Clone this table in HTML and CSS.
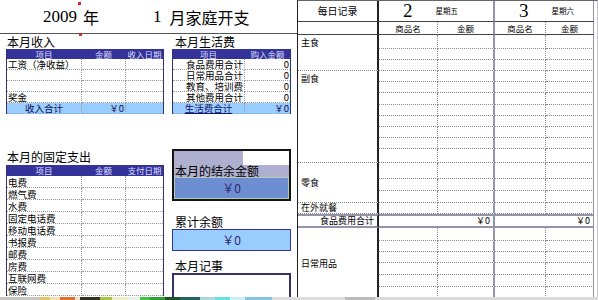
FILE: index.html
```html
<!DOCTYPE html>
<html lang="zh-CN">
<head>
<meta charset="utf-8">
<title>1月家庭开支</title>
<link rel="stylesheet" href="styles.css">
</head>
<body>
<div class="sheet">
  <div class="left">
    <span class="mark m1"></span>
    <span class="mark m2"></span>
    <div class="title">
      <span class="num yr">2009</span><span class="cj">年</span>
      <span class="num mo">1</span><span class="cj">月家庭开支</span>
    </div>

    <div class="blocks upper">
      <div class="block">
        <div class="cap">本月收入</div>
        <div class="tbl t3 income">
          <div class="h">项目</div><div class="h">金额</div><div class="h">收入日期</div>
          <div>工资（净收益）</div><div></div><div></div>
          <div></div><div></div><div></div>
          <div></div><div></div><div></div>
          <div>奖金</div><div></div><div></div>
          <div class="tot c">收入合计</div><div class="tot r">￥0</div><div class="tot"></div>
        </div>
      </div>
      <div class="block narrow">
        <div class="cap pad">本月生活费</div>
        <div class="tbl t2 living">
          <div class="h">项目</div><div class="h">购入金额</div>
          <div class="r">食品费用合计</div><div class="r">0</div>
          <div class="r">日常用品合计</div><div class="r">0</div>
          <div class="r">教育、培训费</div><div class="r">0</div>
          <div class="r">其他费用合计</div><div class="r">0</div>
          <div class="tot c link">生活费合计</div><div class="tot r">￥0</div>
        </div>
      </div>
    </div>

    <div class="blocks lower">
      <div class="block">
        <div class="cap cap-fixed">本月的固定支出</div>
        <div class="tbl t3 fixed">
          <div class="h">项目</div><div class="h">金额</div><div class="h">支付日期</div>
          <div>电费</div><div></div><div></div>
          <div>燃气费</div><div></div><div></div>
          <div>水费</div><div></div><div></div>
          <div>固定电话费</div><div></div><div></div>
          <div>移动电话费</div><div></div><div></div>
          <div>书报费</div><div></div><div></div>
          <div>邮费</div><div></div><div></div>
          <div>房费</div><div></div><div></div>
          <div>互联网费</div><div></div><div></div>
          <div>保险</div><div></div><div></div>
        </div>
      </div>
      <div class="block narrow">
        <div class="bal">
          <div class="bal-top">
            <div class="bal-white"></div>
            <div class="bal-label">本月的结余金额</div>
          </div>
          <div class="bal-val">￥0</div>
        </div>
        <div class="cap2 tall">累计余额</div>
        <div class="acc">￥0</div>
        <div class="cap2">本月记事</div>
        <div class="memo"></div>
      </div>
    </div>
  </div>

  <div class="right">
    <div class="dh dlab">每日记录</div>
    <div class="dh day d1"><span class="dnum">2</span><span class="wk">星期五</span></div>
    <div class="dh day d2"><span class="dnum">3</span><span class="wk">星期六</span></div>

    <div class="sublab"></div>
    <div class="row sub"><i>商品名</i><i>金额</i><i>商品名</i><i>金额</i></div>

    <div class="lab s3">主食</div>
    <div class="row"><i></i><i></i><i></i><i></i></div>
    <div class="row"><i></i><i></i><i></i><i></i></div>
    <div class="row"><i></i><i></i><i></i><i></i></div>

    <div class="lab s8">副食</div>
    <div class="row"><i></i><i></i><i></i><i></i></div>
    <div class="row"><i></i><i></i><i></i><i></i></div>
    <div class="row"><i></i><i></i><i></i><i></i></div>
    <div class="row"><i></i><i></i><i></i><i></i></div>
    <div class="row"><i></i><i></i><i></i><i></i></div>
    <div class="row"><i></i><i></i><i></i><i></i></div>
    <div class="row"><i></i><i></i><i></i><i></i></div>
    <div class="row"><i></i><i></i><i></i><i></i></div>

    <div class="lab s3 mid">零食</div>
    <div class="row"><i></i><i></i><i></i><i></i></div>
    <div class="row"><i></i><i></i><i></i><i></i></div>
    <div class="row"><i></i><i></i><i></i><i></i></div>

    <div class="lab mid one">在外就餐</div>
    <div class="row"><i></i><i></i><i></i><i></i></div>

    <div class="sum sl">食品费用合计</div>
    <div class="sum sv v1">￥0</div>
    <div class="sum sv v2">￥0</div>

    <div class="lab s6 mid">日常用品</div>
    <div class="row"><i></i><i></i><i></i><i></i></div>
    <div class="row"><i></i><i></i><i></i><i></i></div>
    <div class="row"><i></i><i></i><i></i><i></i></div>
    <div class="row"><i></i><i></i><i></i><i></i></div>
    <div class="row"><i></i><i></i><i></i><i></i></div>
    <div class="row"><i></i><i></i><i></i><i></i></div>
  </div>
</div>
<div class="strip"></div>
</body>
</html>
```
FILE: styles.css
```css
* { box-sizing: border-box; margin: 0; padding: 0; }
html, body { width: 598px; height: 300px; overflow: hidden; background: #fff; }
body { font-family: "Noto Sans CJK SC", "Liberation Sans", sans-serif; color: #000; }

.sheet { display: flex; height: 297px; overflow: hidden; }
.left { width: 297px; flex: none; position: relative; }

.mark { position: absolute; width: 3px; height: 3px; background: #d42a2a; }
.m1 { left: 78px; top: 2px; }
.m2 { left: 79px; top: 33px; }

/* title */
.title { height: 34px; border-bottom: 1px solid #555; display: flex; align-items: center; padding-left: 43px; }
.num { font-family: "Liberation Serif", serif; font-size: 17px; }
.cj { font-family: "Noto Sans CJK SC", sans-serif; font-size: 16px; }
.yr { margin-right: 6px; }
.mo { margin-left: 54px; margin-right: 8px; }

/* blocks */
.blocks { display: flex; gap: 8px; padding-left: 6px; align-items: flex-start; }
.upper { height: 115px; }
.block { width: 158px; flex: none; }
.block.narrow { width: 119px; }
.cap { height: 15px; font-size: 12px; line-height: 14px; display: flex; align-items: flex-end; padding-left: 1px; }
.cap.pad { padding-left: 3px; }
.cap.cap-fixed { height: 16px; line-height: 14px; padding-bottom: 1px; }

/* small tables */
.tbl { display: grid; border-left: 1px solid #33336a; border-right: 1px solid #33336a; font-size: 9.5px; }
.t3 { grid-template-columns: 75px 44px 37px; }
.t2 { grid-template-columns: 72px 45px; }
.income, .living { grid-template-rows: 10px repeat(5, 11px); }
.fixed { grid-template-rows: 11px repeat(10, 12px); }
.tbl > div { border-bottom: 1px dotted #9a9a9a; border-right: 1px dotted #9a9a9a; display: flex; align-items: center; white-space: nowrap; padding: 0 1px; line-height: 10px; }
.t3 > div:nth-child(3n), .t2 > div:nth-child(2n) { border-right: none; }
.tbl > .h { background: #333399; color: #dcdcff; justify-content: center; font-size: 8.5px; line-height: 9px; border-bottom: none; border-right-color: #333399; padding: 0; }
.tbl > .r { justify-content: flex-end; }
.tbl > .c { justify-content: center; }
.tbl > .tot { background: #99ccff; color: #101050; border-bottom-color: #7aa8d8; }
.tbl > .link { text-decoration: underline; color: #14146e; }

/* balance column */
.bal { height: 52px; border: 2px solid #141414; display: flex; flex-direction: column; }
.bal-top { flex: 1; background: #afafd0; display: flex; flex-direction: column; }
.bal-white { align-self: flex-end; width: 46px; height: 14px; background: #fff; }
.bal-label { font-size: 12px; line-height: 12px; padding-left: 1px; }
.bal-val { height: 22px; background: #6d8fd2; border: 1px solid #b9c9b9; text-align: center; font-size: 12px; line-height: 20px; color: #2a2a70; }
.cap2 { height: 22px; font-size: 12px; line-height: 14px; display: flex; align-items: flex-end; padding-left: 3px; }
.cap2.tall { height: 28px; }
.acc { height: 22px; background: #99ccff; border: 1px solid #333399; text-align: center; font-size: 12px; line-height: 20px; color: #2a2a70; }
.memo { height: 40px; border: 2px solid #33336a; background: #fff; }

/* right sheet */
.right { flex: 1; display: grid; align-content: start;
  grid-template-columns: 81px 59px 57px 51px 48px;
  grid-template-rows: 21px 13px 14px 11px 11px 11px 11px 12px 11px 11px 11px 11px 14px 16px 12px 12px 11px 14px 13px 11px 11px 12px 12px 13px;
  border-left: 1px solid #222; border-top: 1px solid #666; border-right: 1px solid #c8c8c8;
  font-size: 9px; line-height: 10px; }
.dh { border-bottom: 1px solid #444; display: flex; align-items: center; }
.dlab { justify-content: center; font-size: 10px; border-right: 2px solid #222; }
.day { grid-column: span 2; padding-left: 24px; gap: 23px; }
.d1 { border-right: 2px solid #9494aa; }
.d2 { border-right: 1px solid #9494aa; }
.dnum { font-family: "Liberation Serif", serif; font-size: 19px; line-height: 20px; }
.wk { font-size: 7.5px; }
.sublab { border-right: 2px solid #222; border-bottom: 1px solid #444; }

.row { display: contents; }
.row > i { font-style: normal; border-bottom: 1px dotted #8a8a8a; }
.row > i:nth-child(1) { border-right: 1px dotted #8a8a8a; }
.row > i:nth-child(2) { border-right: 2px solid #9494aa; }
.row > i:nth-child(3) { border-right: 1px dotted #8a8a8a; }
.row > i:nth-child(4) { border-right: 1px solid #9494aa; }
.sub > i { border-bottom: 1px solid #444; display: flex; align-items: center; justify-content: center; font-size: 8.5px; }

.lab { border-right: 2px solid #222; border-bottom: 1px dotted #8a8a8a; padding: 3px 0 0 3px; }
.lab.mid { display: flex; align-items: center; padding-top: 0; }
.s3 { grid-row: span 3; }
.s8 { grid-row: span 8; }
.s6 { grid-row: span 6; }

.sum { border-top: 2px solid #9494aa; border-bottom: 2px solid #9494aa; display: flex; align-items: center; justify-content: flex-end; padding-right: 3px; }
.sl { border-right: 2px solid #222; }
.sv { grid-column: span 2; }
.v1 { border-right: 2px solid #9494aa; }
.v2 { border-right: 1px solid #9494aa; }

.strip { height: 3px; background: linear-gradient(to right,
  #c8c6c0 0 40px, #e4c460 40px 50px, #f0e2a8 50px 60px, #e07030 60px 75px, #f2e2c8 75px 80px,
  #333320 80px 100px, #a8c448 100px 112px, #f0f0c4 112px 128px, #e8f0e8 128px 140px,
  #44c044 140px 150px, #30a030 150px 165px, #205428 165px 180px, #206464 180px 200px,
  #a8d8d8 200px 215px, #66e0e0 215px 230px, #c8f0f0 230px 245px, #84c2e2 245px 272px,
  #dcdcdc 272px 345px, #bcbcbc 345px 375px, #dadada 375px 598px); }
```
